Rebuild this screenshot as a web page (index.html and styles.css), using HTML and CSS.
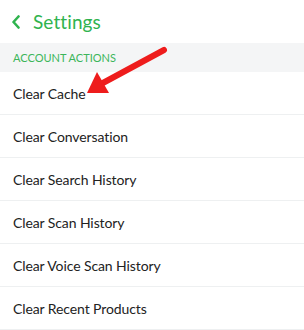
FILE: index.html
```
<!DOCTYPE html>
<html>
<head>
<meta charset="utf-8">
<link rel="stylesheet" href="styles.css">
</head>
<body>
<div class="screen">
  <header class="header">
    <svg class="back" width="10" height="14" viewBox="0 0 10 14"><path d="M7.5 1.5 L2.5 7 L7.5 12.5" fill="none" stroke="#2fb34e" stroke-width="2.6" stroke-linecap="round" stroke-linejoin="round"/></svg>
    <h1 class="title">Settings</h1>
  </header>
  <div class="section">ACCOUNT ACTIONS</div>
  <ul class="list">
    <li class="row">Clear Cache</li>
    <li class="row">Clear Conversation</li>
    <li class="row">Clear Search History</li>
    <li class="row">Clear Scan History</li>
    <li class="row">Clear Voice Scan History</li>
    <li class="row">Clear Recent Products</li>
  </ul>
  <svg class="arrow" width="304" height="120" viewBox="0 0 304 120">
    <line x1="164" y1="50" x2="101" y2="84" stroke="#ee1c1c" stroke-width="6" stroke-linecap="round"/>
    <polygon points="87,93 97,72 109,93" fill="#ee1c1c"/>
  </svg>
</div>
</body>
</html>
```
FILE: styles.css
```
* { box-sizing: border-box; }
html, body { margin: 0; padding: 0; background: #fff; }
body { font-family: Lato, "Open Sans", sans-serif; }
.screen { position: relative; width: 304px; height: 330px; overflow: hidden; }
.header { height: 43px; display: flex; align-items: center; padding-left: 11px; gap: 12px; }
.back { display: block; margin-top: 1px; }
.title { margin: 0; font-size: 19px; font-weight: 400; color: #2fb34e; letter-spacing: 0.1px; }
.section { height: 29px; background: #f4f5f6; display: flex; align-items: center; padding-left: 13px; font-size: 11px; color: #3cb55a; letter-spacing: 0; }
.list { list-style: none; margin: 0; padding: 0; }
.row { height: 43px; display: flex; align-items: center; padding-left: 13px; font-size: 14px; color: #222; border-bottom: 1px solid #eef0f1; letter-spacing: -0.1px; }
.arrow { position: absolute; left: 0; top: 0; }
```
